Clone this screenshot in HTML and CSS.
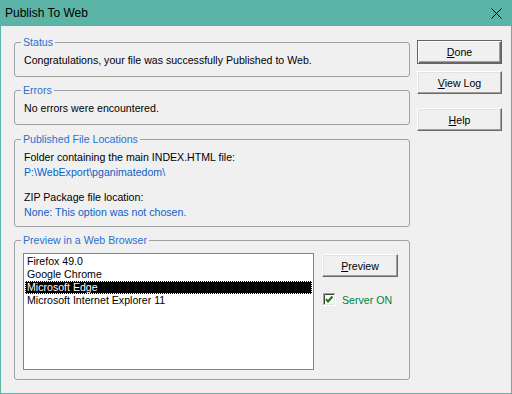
FILE: index.html
```html
<!doctype html>
<html lang="en">
  <head>
    <meta charset="UTF-8" />
    <title>Publish To Web</title>
    <link rel="stylesheet" href="styles.css">
  </head>
  <body>
    <div class="window">
      <!-- Title bar -->
      <div class="titlebar">
        <span class="title">Publish To Web</span>
        <svg class="close" width="11" height="11" viewBox="0 0 11 11">
          <path d="M0.5 0.5 L10.5 10.5 M10.5 0.5 L0.5 10.5" stroke="#000" stroke-width="1" fill="none" />
        </svg>
      </div>

      <div class="dialog">
        <div class="main">
          <div class="group">
            <div class="group-title">Status</div>
            <p class="line">Congratulations, your file was successfully Published to Web.</p>
          </div>

          <div class="group">
            <div class="group-title">Errors</div>
            <p class="line">No errors were encountered.</p>
          </div>

          <div class="group group-files">
            <div class="group-title">Published File Locations</div>
            <p class="line">Folder containing the main INDEX.HTML file:</p>
            <p class="line line-tight path">P:\WebExport\pganimatedom\</p>
            <p class="line line-gap">ZIP Package file location:</p>
            <p class="line line-tight path">None: This option was not chosen.</p>
          </div>

          <div class="group group-preview">
            <div class="group-title">Preview in a Web Browser</div>
            <div class="preview-row">
              <ul class="listbox">
                <li>Firefox 49.0</li>
                <li>Google Chrome</li>
                <li class="selected">Microsoft Edge</li>
                <li>Microsoft Internet Explorer 11</li>
              </ul>
              <div class="preview-side">
                <button class="btn btn-preview"><u>P</u>review</button>
                <label class="check-row">
                  <svg class="checkbox" width="13" height="13" viewBox="0 0 13 13">
                    <rect x="0" y="0" width="13" height="13" fill="#fff" />
                    <path d="M0.5 12 V0.5 H12" stroke="#a0a0a0" fill="none" />
                    <path d="M1.5 11 V1.5 H11" stroke="#404040" fill="none" />
                    <path d="M0 12.5 H12.5 V0" stroke="#fff" fill="none" />
                    <path d="M1 11.5 H11.5 V1" stroke="#e3e3e3" fill="none" />
                    <path d="M3 6 L5 8.5 L9.5 3.5" stroke="#008000" stroke-width="2" fill="none" />
                  </svg>
                  <span>Server ON</span>
                </label>
              </div>
            </div>
          </div>
        </div>

        <!-- Dialog buttons -->
        <div class="actions">
          <button class="btn btn-default"><u>D</u>one</button>
          <button class="btn btn-log"><u>V</u>iew Log</button>
          <button class="btn btn-help"><u>H</u>elp</button>
        </div>
      </div>
    </div>
  </body>
</html>
```

FILE: styles.css
```css
body {
  margin: 0;
  background: #f0f0f0;
  font-family: 'Liberation Sans', Arial, sans-serif;
  font-size: 10.6px;
  color: #000;
}

.window {
  box-sizing: border-box;
  width: 512px;
  height: 394px;
  border: 1px solid #5bb4a5;
  border-top: 0;
  background: #f0f0f0;
  display: flex;
  flex-direction: column;
}

/* Title bar */
.titlebar {
  height: 26px;
  flex: none;
  background: #5bb4a5;
  display: flex;
  align-items: center;
  justify-content: space-between;
  padding: 0 9px 0 4px;
}

.title {
  font-size: 12px;
  color: #000;
}

.close {
  display: block;
}

/* Dialog body */
.dialog {
  display: flex;
  gap: 7px;
  padding: 14px 9px 0 13px;
}

.main {
  width: 396px;
  padding-top: 2px;
  display: flex;
  flex-direction: column;
}

.group {
  border: 1px solid #a0a0a0;
  border-radius: 3px;
  padding: 0 9px 9px 9px;
  display: flex;
  flex-direction: column;
}

.group + .group {
  margin-top: 13px;
}

.group-title {
  align-self: flex-start;
  margin: -7px 0 0 -3px;
  padding: 0 2px;
  line-height: 13px;
  color: #2b6fcf;
  background: #f0f0f0;
}

.line {
  margin: 5px 0 0;
  line-height: 13px;
}

.line-tight {
  margin-top: 2px;
}

.line-gap {
  margin-top: 12px;
}

.path {
  color: #0a5fc8;
}

.group-files {
  padding-bottom: 7px;
}

.group.group-files {
  margin-top: 14px;
}

/* Preview group */
.group-preview {
  padding: 0 11px 9px 8px;
}

.group-preview .group-title {
  margin-left: -2px;
}

.preview-row {
  display: flex;
  gap: 8px;
  margin-top: 6px;
}

.listbox {
  box-sizing: border-box;
  width: 291px;
  height: 117px;
  margin: 0;
  padding: 1px;
  list-style: none;
  border: 1px solid #4a90d9;
  background: #fff;
}

.listbox li {
  line-height: 13px;
  padding-left: 2px;
  white-space: nowrap;
}

.listbox li.selected {
  background: #000;
  color: #fff;
  outline: 1px dotted #fff;
  outline-offset: -1px;
}

.preview-side {
  display: flex;
  flex-direction: column;
  align-items: flex-start;
  padding-top: 1px;
}

.check-row {
  display: flex;
  align-items: center;
  gap: 6px;
  margin: 16px 0 0 1px;
  color: #008040;
}

.checkbox {
  display: block;
}

/* Buttons */
.btn {
  box-sizing: border-box;
  width: 85px;
  height: 23px;
  padding: 0;
  font-family: inherit;
  font-size: 10.6px;
  color: #000;
  background: #f0f0f0;
  border: 1px solid;
  border-color: #fff #696969 #696969 #fff;
  box-shadow: inset -1px -1px #a0a0a0, inset 1px 1px #e3e3e3;
  border-radius: 0;
}

.btn-default {
  height: 24px;
  border: 1px solid #646464;
  box-shadow: inset 1px 1px #fff, inset -1px -1px #696969, inset -2px -2px #a0a0a0;
}

.actions {
  display: flex;
  flex-direction: column;
  width: 85px;
}

.btn-log {
  margin-top: 7px;
}

.btn-help {
  margin-top: 14px;
}

.btn-preview {
  width: 76px;
}
```
